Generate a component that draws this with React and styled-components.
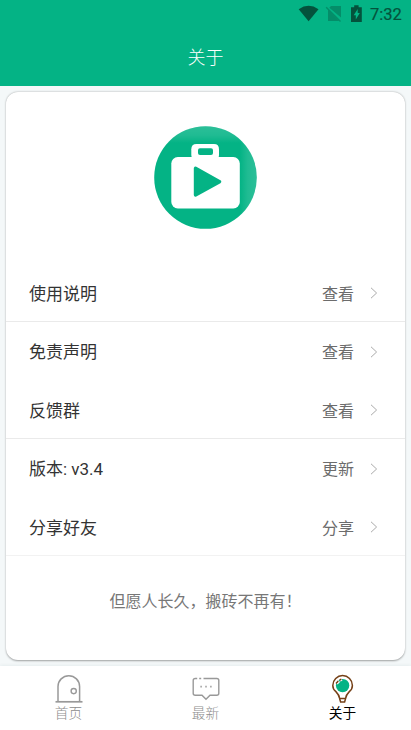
import React from "react";
import styled, { createGlobalStyle } from "styled-components";

const GlobalStyle = createGlobalStyle`
    :root{
        --green: #04b385;
        --page: #f4f8f9;
    }
    *{
        box-sizing: border-box;
    }
    body{
        margin: 0;
        background-color: var(--page);
        font-family: Roboto, "Noto Sans CJK SC", sans-serif;
    }
`

const Screen = styled.div`
    display: flex;
    flex-direction: column;
    width: 100%;
    height: 100vh;
    overflow: hidden;
    background-color: var(--page);
`

const Header = styled.header`
    flex: none;
    height: 86px;
    background-color: var(--green);
`

const StatusBar = styled.div`
    display: flex;
    justify-content: flex-end;
    height: 28px;
    padding-right: 9px;
    color: #04523c;
    svg{
        display: block;
    }
`

const Clock = styled.span`
    width: 32px;
    margin-left: 7px;
    font-size: 16.5px;
    font-weight: 400;
    line-height: 29px;
    white-space: nowrap;
    -webkit-text-stroke: 0.2px currentColor;
`

const Title = styled.h1`
    margin: 0;
    color: #fff;
    font-size: 18px;
    font-weight: 300;
    line-height: 60px;
    text-align: center;
`

const Card = styled.main`
    flex: 1;
    margin: 6px;
    padding-top: 34px;
    border-radius: 12px;
    background-color: #fff;
    box-shadow: 0 0.5px 2px rgba(0, 0, 0, 0.36);
`

const LogoWrap = styled.div`
    display: flex;
    justify-content: center;
    margin-bottom: 34.5px;
`

const List = styled.ul`
    margin: 0;
    padding: 0;
    list-style: none;
`

const Row = styled.li`
    display: flex;
    align-items: center;
    height: 58.5px;
    padding: 0 27px 0 23px;
    border-bottom: 1px solid ${({ $line }) => $line || "transparent"};
    svg{
        margin-top: 2px;
    }
`

const Label = styled.span`
    flex: 1;
    color: #333;
    font-size: 17px;
`

const Value = styled.span`
    margin-right: 16px;
    padding-top: 1px;
    color: #6c6c6c;
    font-size: 16px;
`

const Note = styled.p`
    margin: 34px 0 0;
    color: #777;
    font-size: 16px;
    line-height: 24px;
    text-align: center;
`

const TabBar = styled.nav`
    display: flex;
    flex: none;
    height: 64px;
    background-color: #fff;
    box-shadow: 0 -1px 3px rgba(0, 60, 60, 0.06);
`

const Tab = styled.a`
    display: flex;
    flex: 1;
    flex-direction: column;
    align-items: center;
    padding-top: 8px;
    color: ${({ $active }) => ($active ? "#000" : "#8c8c8c")};
    font-size: 13.7px;
    font-weight: ${({ $active }) => ($active ? 400 : 300)};
    line-height: 18px;
    svg{
        display: block;
    }
`

const StatusIcons = () => (
    <svg width="65" height="28" viewBox="298 0 65 28">
        <path d="M298.7 9.3Q308.6 2.4 318.5 9.3L308.6 21.3Z" fill="currentColor" />
        <g opacity=".38">
            <path d="M331 6h10v11.5L329.3 7.7ZM328 9.3L339.3 21H328Z" fill="currentColor" />
            <path d="M326.2 7.2L340.5 21.5" stroke="currentColor" strokeWidth="1.4" />
        </g>
        <path d="M351 7.2h3.2V5.3h4.4v1.9h3.2V22H351Z" fill="currentColor" />
        <path d="M357.7 8.9l-4 6.4h2.1v4.3l4-6.5h-2.1Z" fill="#04b385" />
    </svg>
)

const Logo = () => (
    <svg width="103" height="103" viewBox="0 0 103 103">
        <defs>
            <linearGradient id="shineTop" x1="0" y1="0" x2="0" y2="1">
                <stop offset="0" stopColor="#fff" stopOpacity=".16" />
                <stop offset=".55" stopColor="#fff" stopOpacity=".11" />
                <stop offset="1" stopColor="#fff" stopOpacity="0" />
            </linearGradient>
            <linearGradient id="shineRight" x1="1" y1="0" x2="0" y2="0">
                <stop offset="0" stopColor="#fff" stopOpacity=".16" />
                <stop offset=".55" stopColor="#fff" stopOpacity=".11" />
                <stop offset="1" stopColor="#fff" stopOpacity="0" />
            </linearGradient>
            <clipPath id="disc">
                <circle cx="51.5" cy="51.5" r="51.3" />
            </clipPath>
        </defs>
        <g clipPath="url(#disc)">
            <rect width="103" height="103" fill="#04b385" />
            <rect width="103" height="17" fill="url(#shineTop)" />
            <rect x="86" y="12" width="17" height="91" fill="url(#shineRight)" />
        </g>
        <rect x="17.3" y="31" width="68.5" height="51.5" rx="6.5" fill="#fff" />
        <path d="M38.3 32Q37.3 30.8 37.3 29V23.2Q37.3 18 42.5 18H60Q65 18 65 23.2V29Q65 30.8 64 32Z" fill="#fff" />
        <rect x="44" y="22.3" width="15" height="6.6" rx="2" fill="#04b385" />
        <path d="M41.5 42.3V69.1L65.6 55.7Z" fill="#04b385" stroke="#04b385" strokeWidth="3.4" strokeLinejoin="round" />
    </svg>
)

const Chevron = () => (
    <svg width="8" height="12" viewBox="0 0 8 12">
        <path d="M1 .8L6.6 6L1 11.2" fill="none" stroke="#aaa" />
    </svg>
)

const DoorIcon = () => (
    <svg width="28" height="30" viewBox="0 0 28 30" fill="none" stroke="#999">
        <path d="M3 28V12.5A10.8 10.8 0 0 1 24.6 12.5V28" strokeWidth="1.5" />
        <path d="M.5 27.8H27.5" strokeWidth="1.7" />
        <circle cx="18.7" cy="17.1" r="2.6" strokeWidth="1.4" />
    </svg>
)

const ChatIcon = () => (
    <svg width="28" height="30" viewBox="0 0 28 30" fill="none" stroke="#999" strokeWidth="1.4">
        <path d="M5.2 4.5H3.2Q1.2 4.5 1.2 6.5V19.3Q1.2 21.3 3.2 21.3H10L14 25.3L18 21.3H24.8Q26.8 21.3 26.8 19.3V6.5Q26.8 4.5 24.8 4.5H11.5M7.2 4.5H9.2" />
        <path d="M8.4 12.7H9.8M13.3 12.7H14.7M18.2 12.7H19.6" strokeWidth="1.7" />
    </svg>
)

const BulbIcon = () => (
    <svg width="28" height="30" viewBox="0 0 28 30" fill="none" stroke="#754017" strokeWidth="1.5">
        <circle cx="13.6" cy="11.6" r="6.7" fill="#04b385" stroke="none" />
        <path d="M10.6 24.4Q10.2 20.9 6.9 17.6Q3.8 15 3.8 11.4A9.8 9.8 0 0 1 23.4 11.4Q23.4 15 20.3 17.6Q17 20.9 16.6 24.4Z" strokeLinejoin="round" />
        <path d="M10.6 24.5L11.6 28H15.6L16.6 24.5" />
        <path d="M7.8 9.6L10.2 7.2M11 6.4L13 5.7" stroke="#fff" strokeWidth="2.4" />
        <path d="M7 9.4L9.3 7M10.6 6L12.4 5.2" strokeWidth="1.5" />
    </svg>
)

const rows = [
    { label: "使用说明", value: "查看", line: "#eaeaea" },
    { label: "免责声明", value: "查看" },
    { label: "反馈群", value: "查看", line: "#eaeaea" },
    { label: "版本: v3.4", value: "更新" },
    { label: "分享好友", value: "分享", line: "#f2f2f2" },
]

const App = () => {

    return (
        <>
            <GlobalStyle />
            <Screen>
                <Header>
                    <StatusBar>
                        <StatusIcons />
                        <Clock>7:32</Clock>
                    </StatusBar>
                    <Title>关于</Title>
                </Header>
                <Card>
                    <LogoWrap>
                        <Logo />
                    </LogoWrap>
                    <List>
                        {rows.map((row) => (
                            <Row key={row.label} $line={row.line}>
                                <Label>{row.label}</Label>
                                <Value>{row.value}</Value>
                                <Chevron />
                            </Row>
                        ))}
                    </List>
                    <Note>但愿人长久，搬砖不再有！</Note>
                </Card>
                <TabBar>
                    <Tab>
                        <DoorIcon />
                        首页
                    </Tab>
                    <Tab>
                        <ChatIcon />
                        最新
                    </Tab>
                    <Tab $active>
                        <BulbIcon />
                        关于
                    </Tab>
                </TabBar>
            </Screen>
        </>
    );
};


export default App;
